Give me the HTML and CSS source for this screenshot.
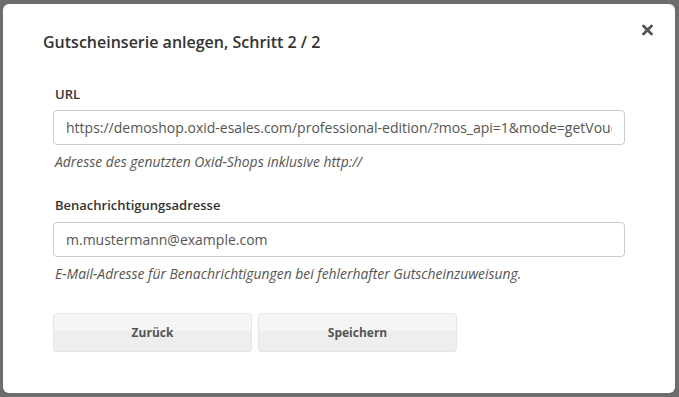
FILE: index.html
```html
<!DOCTYPE html>
<html lang="de">
<head>
    <meta charset="UTF-8">
    <meta name="viewport" content="width=device-width, initial-scale=1.0">
    <title>Gutscheinserie anlegen</title>
    <link rel="stylesheet" href="styles.css">
</head>
<body>
    <div class="modal">
        <div class="modal-header">
            <h2 class="modal-title">Gutscheinserie anlegen, Schritt 2 / 2</h2>
            <span class="close" title="Schließen">
                <svg width="11" height="12" viewBox="0 0 11 12">
                    <path d="M1.5 2 L9.5 10 M9.5 2 L1.5 10" stroke="#555" stroke-width="2.8" stroke-linecap="round"/>
                </svg>
            </span>
        </div>
        <form class="modal-body">
            <div class="field">
                <label class="field-label" for="url">URL</label>
                <input class="field-input" id="url" type="text" value="https://demoshop.oxid-esales.com/professional-edition/?mos_api=1&amp;mode=getVoucherSeries">
                <p class="field-help">Adresse des genutzten Oxid-Shops inklusive http://</p>
            </div>
            <div class="field">
                <label class="field-label" for="mail">Benachrichtigungsadresse</label>
                <input class="field-input" id="mail" type="text" value="m.mustermann@example.com">
                <p class="field-help">E-Mail-Adresse für Benachrichtigungen bei fehlerhafter Gutscheinzuweisung.</p>
            </div>
            <div class="actions">
                <button type="button" class="btn">Zurück</button>
                <button type="button" class="btn">Speichern</button>
            </div>
        </form>
    </div>
</body>
</html>
```

FILE: styles.css
```css
body {
    margin: 0;
    height: 397px;
    background-color: #6d6d6d;
    font-family: "Open Sans", Arial, sans-serif;
    color: #333;
    overflow: hidden;
}

.modal {
    position: relative;
    margin: 4px 4px 0 3px;
    height: 389px;
    background-color: #fff;
    border-radius: 6px;
    box-sizing: border-box;
}

.modal-header {
    padding: 26px 40px 0 40px;
}

.modal-title {
    margin: 0;
    font-size: 16px;
    font-weight: 600;
    line-height: 24px;
    color: #333;
}

.close {
    position: absolute;
    top: 20px;
    right: 22px;
    display: flex;
    cursor: pointer;
}

.modal-body {
    padding: 31px 50px 0 50px;
}

.field {
    margin-bottom: 24px;
}

.field-label {
    display: block;
    padding-left: 2px;
    margin-bottom: 7px;
    font-size: 13px;
    font-weight: 600;
    line-height: 18px;
    color: #333;
}

.field + .field .field-label {
    margin-bottom: 8px;
}

.field-input {
    display: block;
    width: 100%;
    height: 35px;
    padding: 0 12px;
    box-sizing: border-box;
    border: 1px solid #ccc;
    border-radius: 4px;
    font-family: inherit;
    font-size: 14px;
    color: #555;
}

.field-help {
    margin: 7px 0 0 0;
    padding-left: 2px;
    font-size: 13.9px;
    font-style: italic;
    line-height: 20px;
    color: #555;
}

.actions {
    display: flex;
    gap: 6px;
    padding-top: 5px;
}

.btn {
    width: 199px;
    height: 39px;
    border: 1px solid #e6e6e6;
    border-radius: 3px;
    background: linear-gradient(to bottom, #f5f5f5 0, #f5f5f5 45%, #eeeeee 45%, #eeeeee 100%);
    font-family: inherit;
    font-size: 12px;
    font-weight: 700;
    color: #555;
    cursor: pointer;
}
```
